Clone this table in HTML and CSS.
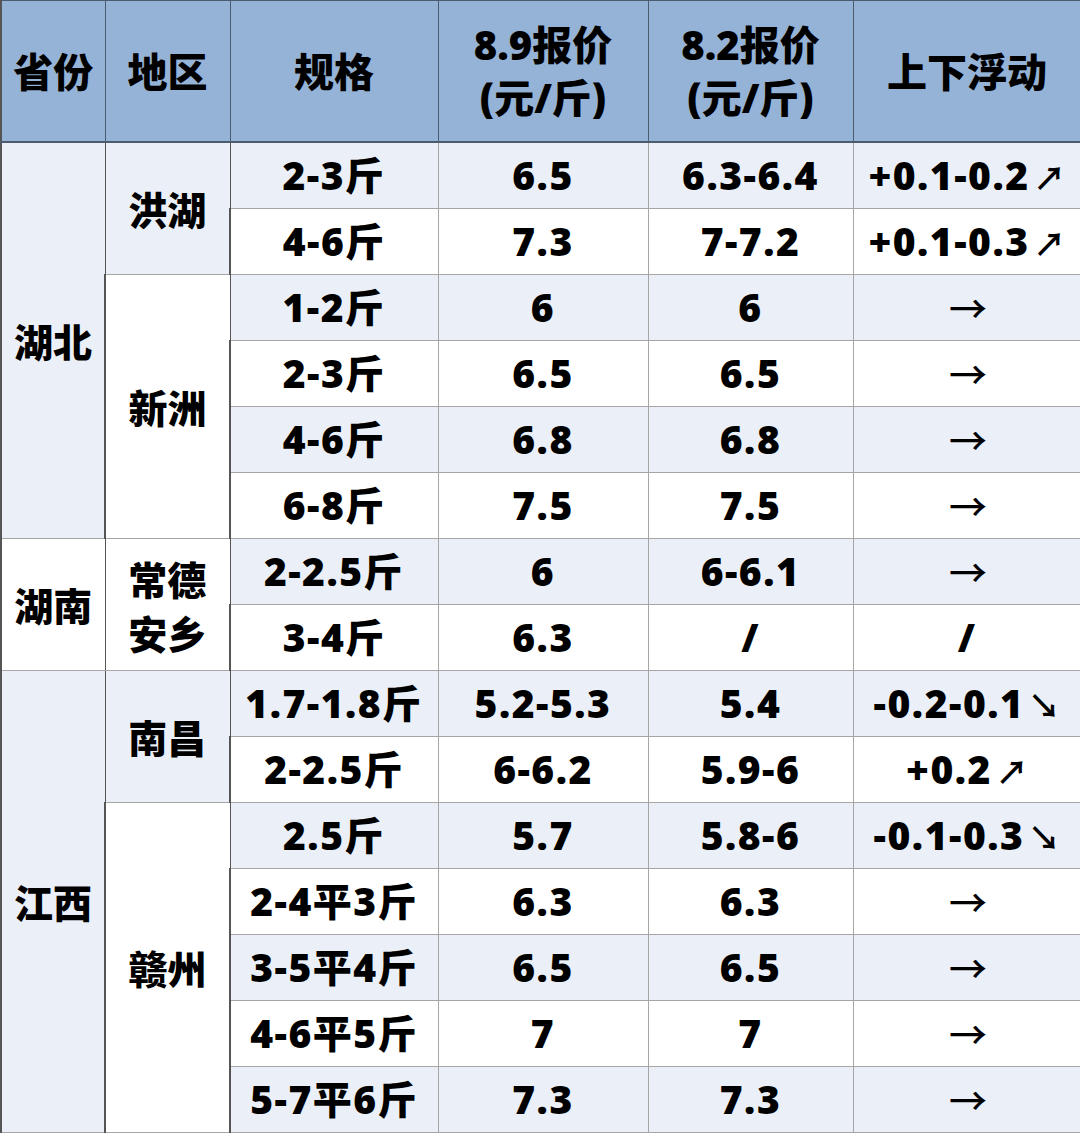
FILE: index.html
```html
<!DOCTYPE html>
<html lang="zh">
<head>
<meta charset="utf-8">
<link rel="stylesheet" href="styles.css">
</head>
<body>
<table class="price">
<colgroup>
<col class="c1"><col class="c2"><col class="c3"><col class="c4"><col class="c5"><col class="c6">
</colgroup>
<thead>
<tr class="head">
<th>省份</th><th>地区</th><th>规格</th><th>8.9报价<br>(元/斤)</th><th>8.2报价<br>(元/斤)</th><th>上下浮动</th>
</tr>
</thead>
<tbody>
<tr class="alt"><td rowspan="6" class="alt">湖北</td><td rowspan="2" class="alt">洪湖</td><td>2-3斤</td><td>6.5</td><td>6.3-6.4</td><td>+0.1-0.2<span class="ar diag">↗</span></td></tr>
<tr class="plain"><td>4-6斤</td><td>7.3</td><td>7-7.2</td><td>+0.1-0.3<span class="ar diag">↗</span></td></tr>
<tr class="alt"><td rowspan="4" class="plain">新洲</td><td>1-2斤</td><td>6</td><td>6</td><td><span class="ar">→</span></td></tr>
<tr class="plain"><td>2-3斤</td><td>6.5</td><td>6.5</td><td><span class="ar">→</span></td></tr>
<tr class="alt"><td>4-6斤</td><td>6.8</td><td>6.8</td><td><span class="ar">→</span></td></tr>
<tr class="plain"><td>6-8斤</td><td>7.5</td><td>7.5</td><td><span class="ar">→</span></td></tr>
<tr class="alt"><td rowspan="2" class="plain">湖南</td><td rowspan="2" class="plain two">常德<br>安乡</td><td>2-2.5斤</td><td>6</td><td>6-6.1</td><td><span class="ar">→</span></td></tr>
<tr class="plain"><td>3-4斤</td><td>6.3</td><td>/</td><td>/</td></tr>
<tr class="alt"><td rowspan="7" class="alt">江西</td><td rowspan="2" class="alt">南昌</td><td>1.7-1.8斤</td><td>5.2-5.3</td><td>5.4</td><td>-0.2-0.1<span class="ar diag">↘</span></td></tr>
<tr class="plain"><td>2-2.5斤</td><td>6-6.2</td><td>5.9-6</td><td>+0.2<span class="ar diag">↗</span></td></tr>
<tr class="alt"><td rowspan="5" class="plain">赣州</td><td>2.5斤</td><td>5.7</td><td>5.8-6</td><td>-0.1-0.3<span class="ar diag">↘</span></td></tr>
<tr class="plain"><td>2-4平3斤</td><td>6.3</td><td>6.3</td><td><span class="ar">→</span></td></tr>
<tr class="alt"><td>3-5平4斤</td><td>6.5</td><td>6.5</td><td><span class="ar">→</span></td></tr>
<tr class="plain"><td>4-6平5斤</td><td>7</td><td>7</td><td><span class="ar">→</span></td></tr>
<tr class="alt"><td>5-7平6斤</td><td>7.3</td><td>7.3</td><td><span class="ar">→</span></td></tr>
</tbody>
</table>
</body>
</html>
```
FILE: styles.css
```css
html, body {
  margin: 0;
  padding: 0;
  background: #ffffff;
}
.price {
  width: 1080px;
  border-collapse: collapse;
  table-layout: fixed;
  font-family: "Open Sans", "Noto Sans CJK SC", sans-serif;
  font-weight: 800;
  font-size: 39px;
  color: #000;
}
.c1 { width: 104px; }
.c2 { width: 125px; }
.c3 { width: 208px; }
.c4 { width: 210px; }
.c5 { width: 205px; }
.c6 { width: 228px; }
.price th, .price td {
  text-align: center;
  vertical-align: middle;
  padding: 0;
  border: 1px solid #a6a6a6;
  line-height: 1.2;
}
.price th {
  background: #95b3d7;
  height: 140px;
  border: 1px solid #4d5b6e;
  line-height: 53px;
  font-family: "Open Sans", "Noto Sans CJK SC", sans-serif;
  font-size: 40px;
  font-weight: 800;
}
.price td {
  height: 65px;
  letter-spacing: 1.5px;
}
.price td:first-child, .price th:first-child {
  border-left: 2px solid #555;
}
.price td[rowspan] {
  border-left-color: #555;
  border-right-color: #555;
  font-family: "Noto Sans CJK SC", sans-serif;
  font-weight: 900;
  font-size: 39px;
  letter-spacing: 0;
}
.price thead th { border-bottom: 2px solid #4d5b6e; }
tr.alt td { background: #ebf0f8; }
tr.plain td { background: #ffffff; }
tr td.alt { background: #ebf0f8; }
tr td.plain { background: #ffffff; }
.price td.two { line-height: 54px; }
.ar {
  font-family: "Noto Sans CJK SC", sans-serif;
  font-weight: 500;
  font-size: 38px;
  margin-left: 2px;
  letter-spacing: 0;
}
.ar.diag {
  font-size: 32px;
  font-weight: 700;
  margin-left: 4px;
}
```
